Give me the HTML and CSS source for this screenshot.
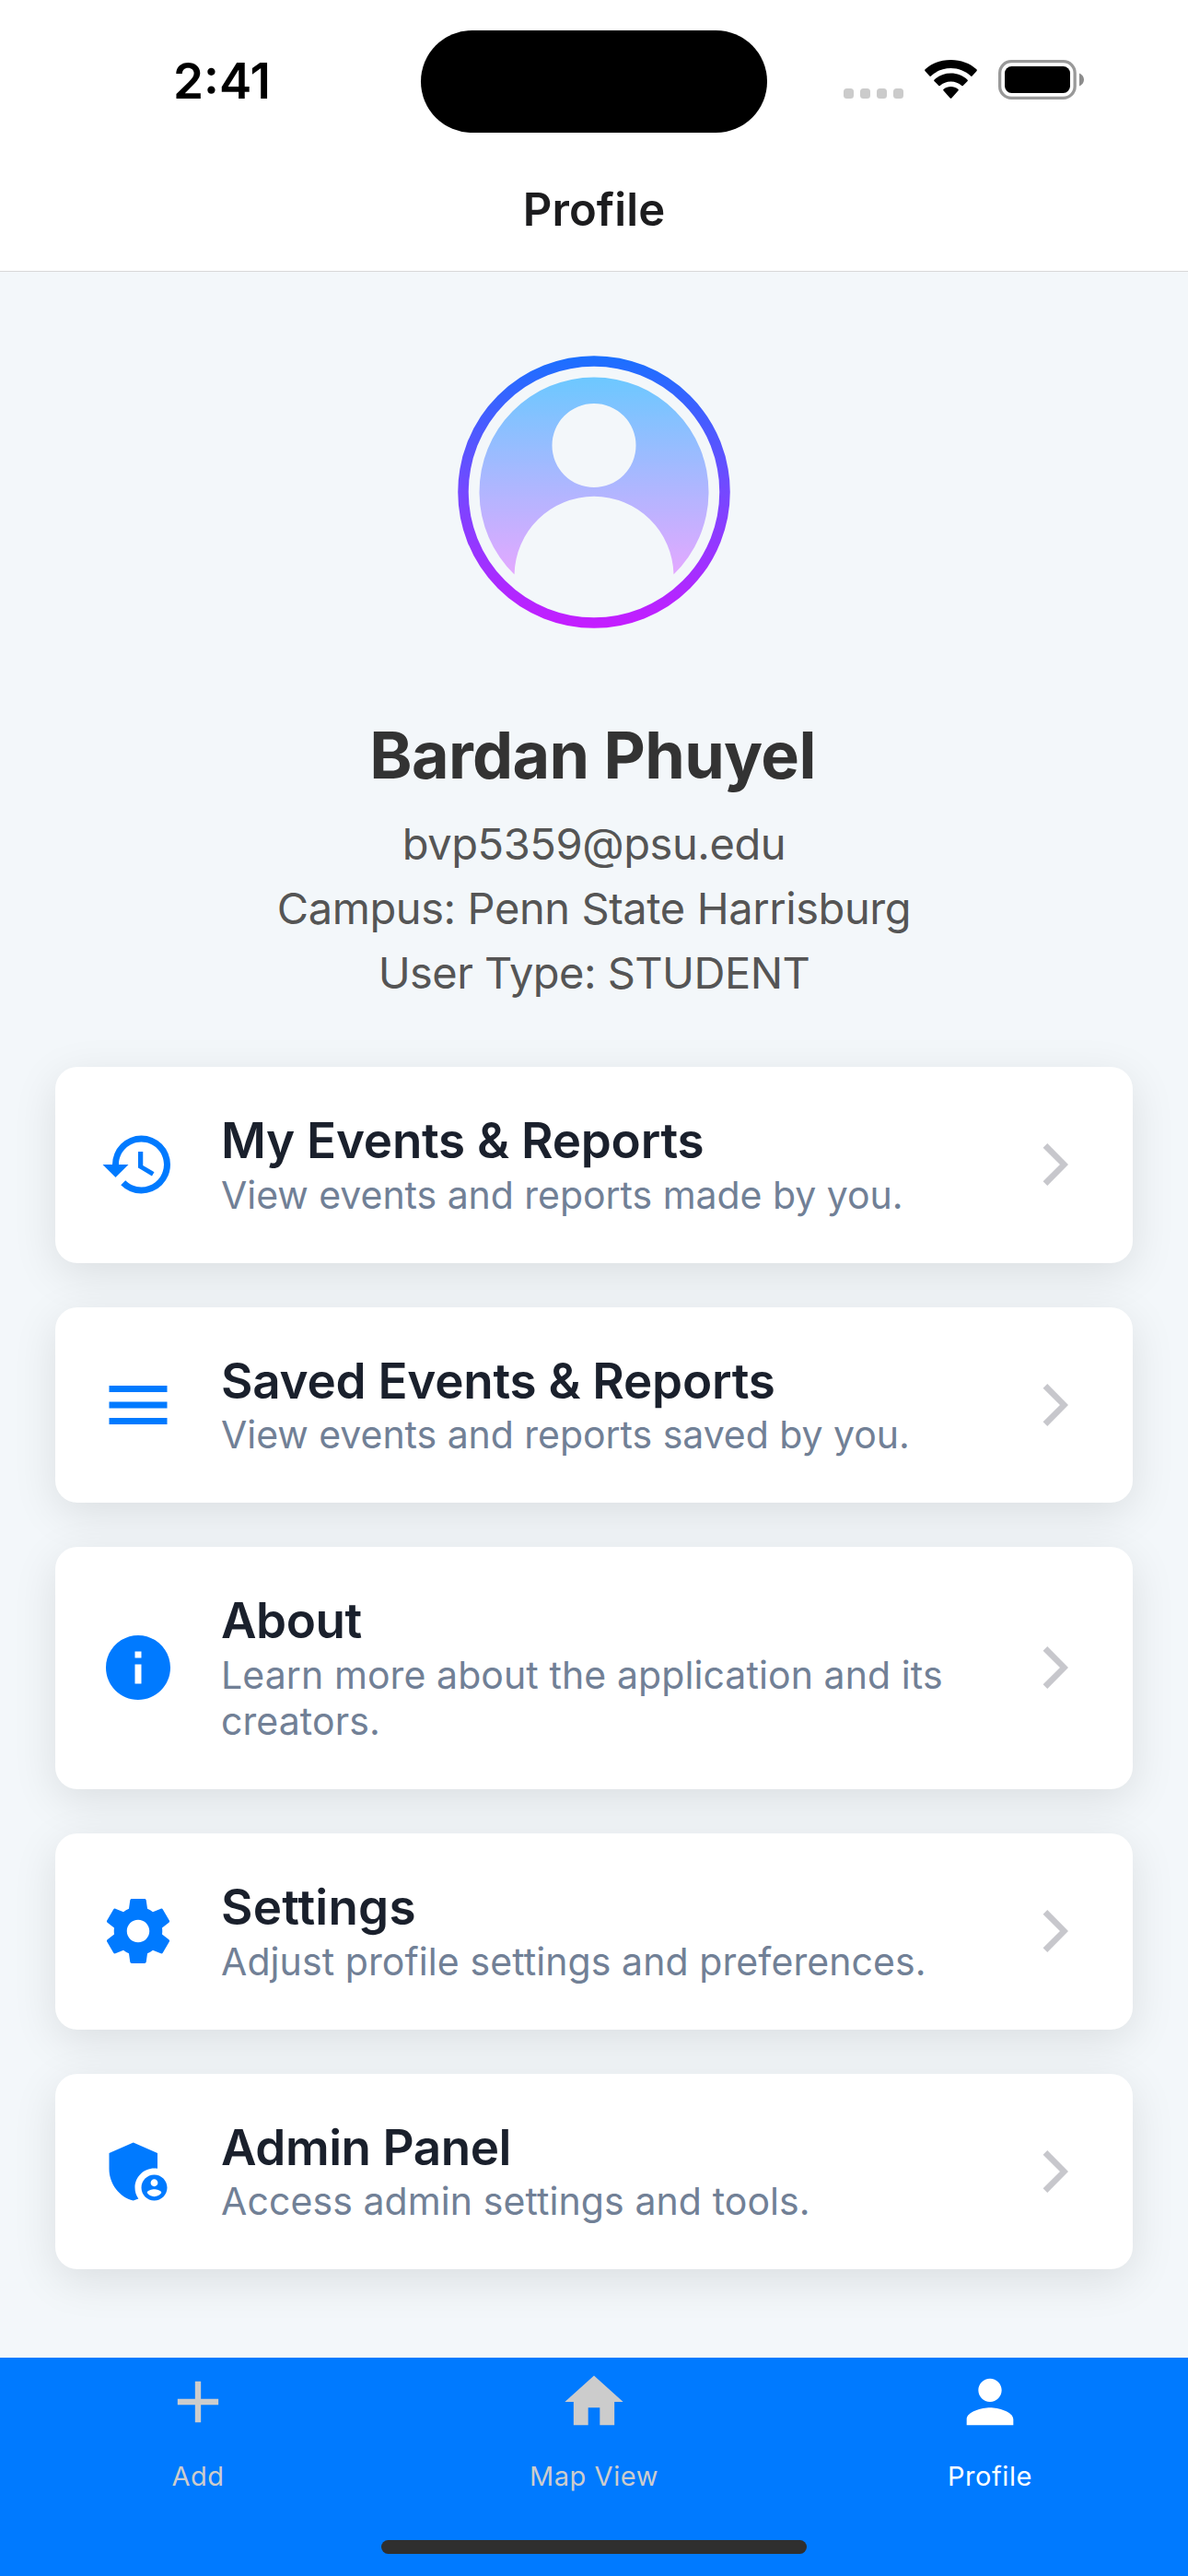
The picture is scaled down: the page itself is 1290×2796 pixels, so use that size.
FILE: index.html
```html
<!DOCTYPE html>
<html lang="en">
<head>
<meta charset="utf-8">
<title>Profile</title>
<link rel="stylesheet" href="styles.css">
</head>
<body>
<div class="screen">
  <div class="status-bar">
    <span class="time">2:41</span>
    <span class="island"></span>
    <div class="indicators">
      <div class="signal"><i></i><i></i><i></i><i></i></div>
      <svg class="wifi" viewBox="0 0 57 42">
        <path d="M0.6 12.3a1.5 1.5 0 0 1 0-2C8 3.600 17.500 0 28.500 0s20.500 3.600 27.900 10.300a1.500 1.500 0 0 1 0 2l-4.800 5.200a1 1 0 0 1-1.500 0C44.200 12 36.700 9 28.500 9S12.800 12 6.900 17.500a1 1 0 0 1-1.500 0z"/>
        <path d="M10.600 23.200a1.200 1.200 0 0 1 0-1.800C15.500 17 21.700 14.600 28.500 14.600S41.500 17 46.400 21.400a1.200 1.200 0 0 1 0 1.800l-4.700 4.700a1 1 0 0 1-1.400 0C37 25 33 23.400 28.500 23.400S20 25 16.700 27.900a1 1 0 0 1-1.400 0z"/>
        <path d="M20.600 33.500a1.200 1.200 0 0 1 .1-1.800C23 30 25.600 29 28.500 29s5.500 1 7.800 2.700a1.200 1.200 0 0 1 .1 1.800l-7.100 7.900a1.100 1.100 0 0 1-1.600 0z"/>
      </svg>
      <svg class="battery" viewBox="0 0 93 43">
        <rect x="1.650" y="1.650" width="81.500" height="39.700" rx="12.500" fill="none" stroke="#999" stroke-width="3.300"/>
        <rect x="7" y="7" width="71" height="29" rx="7.500"/>
        <path d="M88 14.500c3 1.200 5 3.800 5 7s-2 5.800-5 7z" fill="#8c8c8c"/>
      </svg>
    </div>
  </div>
  <header class="header"><h1>Profile</h1></header>

  <main class="content">
    <svg class="avatar" viewBox="0 0 300 300">
      <defs>
        <linearGradient id="ring" x1="0" y1="2" x2="0" y2="298" gradientUnits="userSpaceOnUse">
          <stop offset="0" stop-color="#1a70ff"/><stop offset=".5" stop-color="#7548ff"/><stop offset="1" stop-color="#c61cff"/>
        </linearGradient>
        <linearGradient id="disc" x1="0" y1="25" x2="0" y2="241" gradientUnits="userSpaceOnUse">
          <stop offset="0" stop-color="#6cc8ff"/><stop offset="1" stop-color="#e4a8ff"/>
        </linearGradient>
      </defs>
      <circle cx="150" cy="150" r="142" fill="none" stroke="url(#ring)" stroke-width="11.500"/>
      <path fill="url(#disc)" fill-rule="evenodd" d="M63.500 239.500A124.500 124.500 0 1 1 236.500 239.500A86.520 86.520 0 0 0 63.500 239.500zM150 54a45.500 45.500 0 1 0 0 91 45.500 45.500 0 0 0 0-91z"/>
    </svg>
    <h2 class="name">Bardan Phuyel</h2>
    <p class="meta">bvp5359@psu.edu</p>
    <p class="meta">Campus: Penn State Harrisburg</p>
    <p class="meta meta-type">User Type: STUDENT</p>

    <nav class="cards">
      <a class="card">
        <svg class="icon" viewBox="0 0 24 24"><path d="M13 3a9 9 0 0 0-9 9H1l3.890 3.890.07.14L9 12H6c0-3.870 3.130-7 7-7s7 3.130 7 7-3.130 7-7 7c-1.930 0-3.680-.79-4.940-2.060l-1.420 1.420A8.954 8.954 0 0 0 13 21a9 9 0 0 0 0-18zm-1 5v5l4.280 2.540.72-1.210-3.500-2.080V8H12z"/></svg>
        <div class="card-text"><h3>My Events &amp; Reports</h3><p>View events and reports made by you.</p></div>
        <svg class="chevron" viewBox="0 0 72 72"><path d="M27.300 13l-4.700 4.800L41 36 22.600 54.200l4.700 4.800L50 36z"/></svg>
      </a>
      <a class="card">
        <svg class="icon" viewBox="0 0 24 24"><path d="M3 18h18v-2H3v2zm0-5h18v-2H3v2zm0-7v2h18V6H3z"/></svg>
        <div class="card-text"><h3>Saved Events &amp; Reports</h3><p>View events and reports saved by you.</p></div>
        <svg class="chevron" viewBox="0 0 72 72"><path d="M27.300 13l-4.700 4.800L41 36 22.600 54.200l4.700 4.800L50 36z"/></svg>
      </a>
      <a class="card">
        <svg class="icon" viewBox="0 0 24 24"><path d="M12 2C6.480 2 2 6.480 2 12s4.480 10 10 10 10-4.480 10-10S17.520 2 12 2zm1 15h-2v-6h2v6zm0-8h-2V7h2v2z"/></svg>
        <div class="card-text"><h3 class="tight">About</h3><p class="wide">Learn more about the application and its creators.</p></div>
        <svg class="chevron" viewBox="0 0 72 72"><path d="M27.300 13l-4.700 4.800L41 36 22.600 54.200l4.700 4.800L50 36z"/></svg>
      </a>
      <a class="card">
        <svg class="icon" viewBox="0 0 24 24"><path d="M19.430 12.980c.04-.32.07-.64.07-.98s-.03-.66-.07-.98l2.110-1.650c.19-.15.24-.42.12-.64l-2-3.460c-.12-.22-.39-.3-.61-.22l-2.490 1c-.52-.4-1.080-.73-1.690-.98l-.38-2.650C14.460 2.180 14.250 2 14 2h-4c-.25 0-.46.18-.49.42l-.38 2.650c-.61.25-1.170.59-1.690.98l-2.490-1c-.23-.09-.49 0-.61.22l-2 3.460c-.13.22-.07.49.12.64l2.110 1.650c-.04.32-.07.65-.07.98s.03.66.07.98l-2.110 1.650c-.19.15-.24.42-.12.64l2 3.460c.12.22.39.3.61.22l2.490-1c.52.4 1.080.73 1.690.98l.38 2.650c.03.24.24.42.49.42h4c.25 0 .46-.18.49-.42l.38-2.650c.61-.25 1.170-.59 1.690-.98l2.490 1c.23.09.49 0 .61-.22l2-3.460c.12-.22.07-.49-.12-.64l-2.110-1.650zM12 15.500c-1.930 0-3.500-1.570-3.500-3.500s1.570-3.500 3.500-3.500 3.500 1.570 3.500 3.500-1.570 3.500-3.500 3.500z"/></svg>
        <div class="card-text"><h3 class="loose">Settings</h3><p class="wide">Adjust profile settings and preferences.</p></div>
        <svg class="chevron" viewBox="0 0 72 72"><path d="M27.300 13l-4.700 4.800L41 36 22.600 54.200l4.700 4.800L50 36z"/></svg>
      </a>
      <a class="card">
        <svg class="icon" viewBox="0 0 24 24"><path d="M17 11c.34 0 .67.04 1 .09V6.270L10.500 3 3 6.270v4.910c0 4.540 3.200 8.790 7.500 9.820.55-.13 1.080-.32 1.600-.55-.69-.98-1.100-2.170-1.100-3.450 0-3.310 2.690-6 6-6z"/><path d="M17 13c-2.210 0-4 1.790-4 4s1.790 4 4 4 4-1.790 4-4-1.790-4-4-4zm0 1.380c.62 0 1.120.51 1.120 1.120s-.51 1.120-1.120 1.120-1.120-.51-1.120-1.120.5-1.120 1.120-1.120zm0 5.370c-.93 0-1.740-.46-2.240-1.170.05-.72 1.510-1.080 2.240-1.080s2.190.36 2.240 1.080c-.5.71-1.310 1.170-2.240 1.170z"/></svg>
        <div class="card-text"><h3 class="tight">Admin Panel</h3><p class="wide">Access admin settings and tools.</p></div>
        <svg class="chevron" viewBox="0 0 72 72"><path d="M27.300 13l-4.700 4.800L41 36 22.600 54.200l4.700 4.800L50 36z"/></svg>
      </a>
    </nav>
  </main>

  <footer class="tab-bar">
    <div class="tabs">
      <a class="tab"><svg viewBox="0 0 24 24"><path d="M19 13h-6v6h-2v-6H5v-2h6V5h2v6h6v2z"/></svg><span>Add</span></a>
      <a class="tab"><svg viewBox="0 0 24 24"><path d="M10 20v-6h4v6h5v-8h3L12 3 2 12h3v8z"/></svg><span>Map View</span></a>
      <a class="tab active"><svg viewBox="0 0 24 24"><path d="M12 12c2.210 0 4-1.790 4-4s-1.790-4-4-4-4 1.790-4 4 1.790 4 4 4zm0 2c-2.670 0-8 1.340-8 4v2h16v-2c0-2.660-5.330-4-8-4z"/></svg><span>Profile</span></a>
    </div>
    <div class="home-indicator"></div>
  </footer>
</div>
</body>
</html>
```
FILE: styles.css
```css
* { box-sizing: border-box; margin: 0; padding: 0; }
body { font-family: Inter, "Liberation Sans", sans-serif; background: #f3f7fa; }
svg { display: block; flex: none; }

.screen { display: flex; flex-direction: column; width: 1290px; height: 2796px; overflow: hidden; }

.status-bar { display: flex; align-items: flex-start; height: 177px; padding-left: 188px; background: #fff; flex: none; }
.time { width: 269px; padding-top: 58px; font-size: 53px; line-height: 60px; font-weight: 600; letter-spacing: 0; color: #000; }
.island { width: 376px; height: 111px; margin-top: 33px; border-radius: 56px; background: #000; }
.indicators { display: flex; align-items: flex-start; padding: 65px 0 0 83px; }
.signal { display: flex; gap: 7px; padding-top: 31px; margin-right: 23px; }
.signal i { width: 11px; height: 11px; border-radius: 3.500px; background: #cbcbcb; }
.wifi { width: 57px; height: 42px; margin-right: 23px; }
.battery { width: 93px; height: 43px; }

.header { height: 118px; padding-top: 21px; background: #fff; border-bottom: 1px solid #d8d8d8; text-align: center; flex: none; }
.header h1 { font-size: 49px; line-height: 60px; font-weight: 600; letter-spacing: .1px; color: #1c1c1e; }

.content { flex: 1; min-height: 0; display: flex; flex-direction: column; align-items: center; padding-top: 89px; overflow: hidden; }
.avatar { width: 300px; height: 300px; margin-bottom: 92.500px; }
.name { margin-bottom: 18.500px; padding-right: 3px; font-size: 70px; line-height: 86px; font-weight: 700; letter-spacing: -.63px; color: #333; }
.meta { font-size: 47px; line-height: 70px; letter-spacing: -.41px; color: #555; }
.meta-type { letter-spacing: -.53px; }

.cards { display: flex; flex-direction: column; gap: 48px; width: 1170px; margin-top: 67px; }
.card { display: flex; align-items: center; padding: 48px 48px 49px; border-radius: 24px; background: #fff; box-shadow: 0 12px 48px rgba(0, 0, 0, .1); }
.icon { width: 84px; height: 84px; fill: #007aff; }
.card-text { flex: 1; padding: 0 40px 0 48px; }
.card-text h3 { font-size: 53px; line-height: 65.670px; font-weight: 600; letter-spacing: -.25px; color: #1a202c; }
.card-text h3.tight { letter-spacing: -.45px; }
.card-text h3.loose { letter-spacing: .2px; }
.card-text p { font-size: 41px; line-height: 50px; letter-spacing: -.04px; color: #718096; }
.card-text p.wide { letter-spacing: .09px; }
.chevron { width: 72px; height: 72px; fill: #c7c7cc; }

.tab-bar { display: flex; flex-direction: column; align-items: center; height: 237px; padding-top: 9.500px; background: #007aff; flex: none; }
.tabs { display: flex; width: 100%; }
.tab { flex: 1; display: flex; flex-direction: column; align-items: center; gap: 25px; color: #ccc; font-size: 29px; line-height: 36px; letter-spacing: .55px; }
.tab svg { width: 76px; height: 76px; fill: currentColor; }
.tab.active { color: #fff; }
.home-indicator { width: 462px; height: 15px; margin-top: 51.500px; border-radius: 7.500px; background: #2f2f2f; }
```
